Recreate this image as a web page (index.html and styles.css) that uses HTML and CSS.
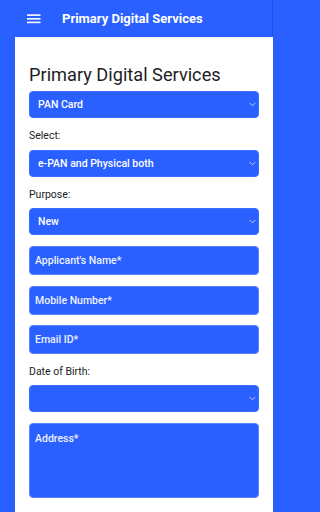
FILE: index.html
```html
<!DOCTYPE html>
<html lang="en">
<head>
<meta charset="utf-8">
<title>Primary Digital Services</title>
<link rel="stylesheet" href="styles.css">
</head>
<body>
<div class="app">
<header class="topbar">
  <svg class="menu-icon" width="14" height="10" viewBox="0 0 14 10" aria-hidden="true">
    <rect x="0" y="0.3" width="13.5" height="1.6" fill="#fff"/>
    <rect x="0" y="4" width="13.5" height="1.6" fill="#fff"/>
    <rect x="0" y="7.6" width="13.5" height="1.6" fill="#fff"/>
  </svg>
  <span class="topbar-title">Primary Digital Services</span>
</header>
<main class="card">
  <h1 class="page-title">Primary Digital Services</h1>

  <div class="select-wrap">
    <select class="field select"><option>PAN Card</option></select>
    <svg class="chev" width="7" height="5" viewBox="0 0 7 5"><path d="M0.6 0.9 L3.5 3.8 L6.4 0.9" fill="none" stroke="#cdd8ff" stroke-width="0.9"/></svg>
  </div>

  <label class="label">Select:</label>
  <div class="select-wrap">
    <select class="field select"><option>e-PAN and Physical both</option></select>
    <svg class="chev" width="7" height="5" viewBox="0 0 7 5"><path d="M0.6 0.9 L3.5 3.8 L6.4 0.9" fill="none" stroke="#cdd8ff" stroke-width="0.9"/></svg>
  </div>

  <label class="label">Purpose:</label>
  <div class="select-wrap">
    <select class="field select"><option>New</option></select>
    <svg class="chev" width="7" height="5" viewBox="0 0 7 5"><path d="M0.6 0.9 L3.5 3.8 L6.4 0.9" fill="none" stroke="#cdd8ff" stroke-width="0.9"/></svg>
  </div>

  <input class="field input" type="text" placeholder="Applicant's Name*">
  <input class="field input" type="text" placeholder="Mobile Number*">
  <input class="field input" type="text" placeholder="Email ID*">

  <label class="label">Date of Birth:</label>
  <div class="select-wrap">
    <select class="field select"><option></option></select>
    <svg class="chev" width="7" height="5" viewBox="0 0 7 5"><path d="M0.6 0.9 L3.5 3.8 L6.4 0.9" fill="none" stroke="#cdd8ff" stroke-width="0.9"/></svg>
  </div>

  <textarea class="field textarea" placeholder="Address*"></textarea>
</main>
</div>
</body>
</html>
```
FILE: styles.css
```css
html, body {
  margin: 0;
  padding: 0;
}
body {
  background-color: #2a60ff;
  font-family: Roboto, "Liberation Sans", Arial, sans-serif;
  height: 512px;
  overflow: hidden;
}
.app {
  width: 288px;
  height: 512px;
  overflow: hidden;
  background-color: #2a60ff;
  background-image: linear-gradient(to right, transparent 272px, #2453e6 272px, #2453e6 273px, transparent 273px);
}
.topbar {
  height: 37px;
  display: flex;
  align-items: center;
  padding-left: 27px;
  box-sizing: border-box;
}
.menu-icon {
  display: block;
}
.topbar-title {
  margin-left: 21px;
  color: #fff;
  font-weight: 700;
  font-size: 13px;
  line-height: 16px;
}
.card {
  width: 258px;
  box-sizing: border-box;
  margin: 0 0 0 15px;
  background: #fff;
  padding: 27px 14px 0 14px;
  height: 475px;
  display: flex;
  flex-direction: column;
}
.page-title {
  margin: 0 0 6px 0;
  font-weight: 400;
  font-size: 18.2px;
  line-height: 21px;
  color: #1d1d1f;
}
.label {
  display: block;
  font-size: 10.5px;
  line-height: 14px;
  color: #222;
  margin: 0 0 6.6px 0;
}
.select-wrap {
  position: relative;
  margin-bottom: 11px;
  flex: none;
}
.field {
  display: block;
  width: 100%;
  box-sizing: border-box;
  margin: 0;
  background: #2a60ff;
  color: #fff;
  font-family: Roboto, "Liberation Sans", Arial, sans-serif;
  border-radius: 4px;
  outline: none;
  flex: none;
}
.select {
  -webkit-appearance: none;
  appearance: none;
  height: 27px;
  border: 1px solid #3c6dff;
  padding: 0 16px 0 8px;
  font-size: 10.5px;
  font-weight: 500;
}
.chev {
  position: absolute;
  right: 3px;
  top: 11px;
}
.input {
  height: 29px;
  border: 1px solid #5a86ff;
  padding: 0 5px;
  font-size: 10.5px;
  font-weight: 500;
  margin-bottom: 10.5px;
}
.input::placeholder, .textarea::placeholder {
  color: #eef2ff;
  opacity: 1;
}
.textarea {
  height: 75px;
  border: 1px solid #5a86ff;
  padding: 8px 5px;
  font-size: 10.5px;
  font-weight: 500;
  resize: none;
}
```
